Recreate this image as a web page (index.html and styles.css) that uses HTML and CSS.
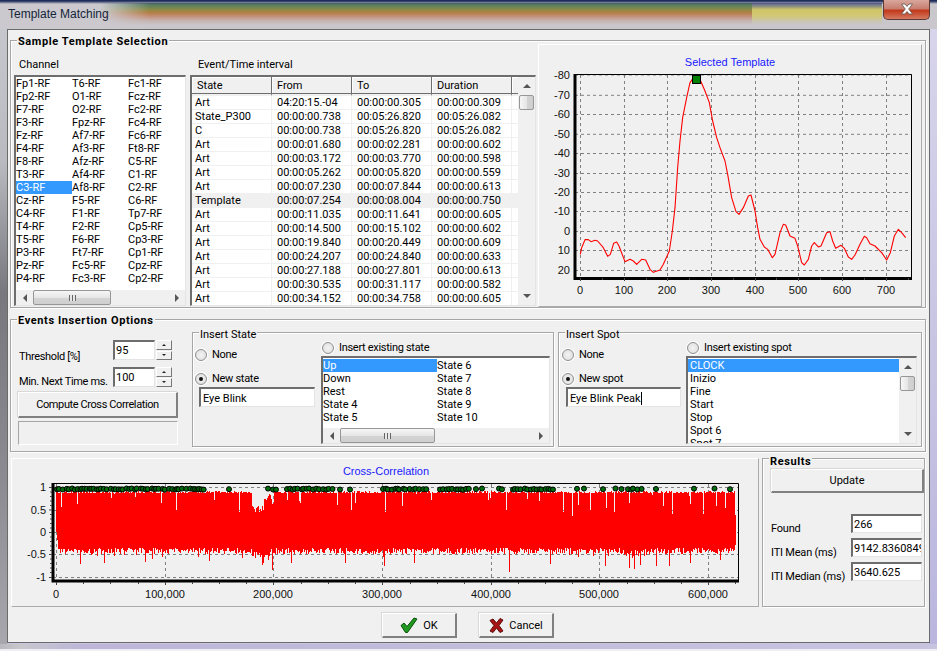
FILE: index.html
```html
<!DOCTYPE html>
<html lang="en">
<head>
<meta charset="utf-8">
<title>Template Matching</title>
<link rel="stylesheet" href="styles.css">
</head>
<body>
<div class="window">
  <header class="titlebar">
    <span class="title">Template Matching</span>
    <button class="close" type="button" aria-label="Close">
      <svg width="18" height="12" viewBox="0 0 18 12"><path d="M3.500 1h3.500l2 2.500 2-2.500h3.500l-3.800 5 3.800 5h-3.500l-2-2.500-2 2.500h-3.500l3.800-5z" fill="#fff" stroke="#5f5550" stroke-width=".8"/></svg>
    </button>
  </header>
  <main class="client">
    <section class="group sample">
      <span class="legend strong">Sample Template Selection</span>
      <div class="col channel-col">
        <div class="cap">Channel</div>
        <div class="sunken channel-list">
          <div class="channels">
            <span>Fp1-RF</span><span>Fp2-RF</span><span>F7-RF</span><span>F3-RF</span><span>Fz-RF</span><span>F4-RF</span><span>F8-RF</span><span>T3-RF</span><span class="sel">C3-RF</span><span>Cz-RF</span><span>C4-RF</span><span>T4-RF</span><span>T5-RF</span><span>P3-RF</span><span>Pz-RF</span><span>P4-RF</span>
            <span>T6-RF</span><span>O1-RF</span><span>O2-RF</span><span>Fpz-RF</span><span>Af7-RF</span><span>Af3-RF</span><span>Afz-RF</span><span>Af4-RF</span><span>Af8-RF</span><span>F5-RF</span><span>F1-RF</span><span>F2-RF</span><span>F6-RF</span><span>Ft7-RF</span><span>Fc5-RF</span><span>Fc3-RF</span>
            <span>Fc1-RF</span><span>Fcz-RF</span><span>Fc2-RF</span><span>Fc4-RF</span><span>Fc6-RF</span><span>Ft8-RF</span><span>C5-RF</span><span>C1-RF</span><span>C2-RF</span><span>C6-RF</span><span>Tp7-RF</span><span>Cp5-RF</span><span>Cp3-RF</span><span>Cp1-RF</span><span>Cpz-RF</span><span>Cp2-RF</span>
          </div>
          <div class="hscroll"><i class="arrow a-left"></i><div class="track"><div class="thumb thumb-channel"><b class="grip"></b></div></div><i class="arrow a-right"></i></div>
        </div>
      </div>
      <div class="col events-col">
        <div class="cap">Event/Time interval</div>
        <div class="sunken events">
          <div class="table-wrap">
            <table>
              <thead><tr><th>State</th><th>From</th><th>To</th><th>Duration</th><th></th></tr></thead>
              <tbody>
                <tr><td>Art</td><td>04:20:15.-04</td><td>00:00:00.305</td><td>00:00:00.309</td><td></td></tr>
                <tr><td>State_P300</td><td>00:00:00.738</td><td>00:05:26.820</td><td>00:05:26.082</td><td></td></tr>
                <tr><td>C</td><td>00:00:00.738</td><td>00:05:26.820</td><td>00:05:26.082</td><td></td></tr>
                <tr><td>Art</td><td>00:00:01.680</td><td>00:00:02.281</td><td>00:00:00.602</td><td></td></tr>
                <tr><td>Art</td><td>00:00:03.172</td><td>00:00:03.770</td><td>00:00:00.598</td><td></td></tr>
                <tr><td>Art</td><td>00:00:05.262</td><td>00:00:05.820</td><td>00:00:00.559</td><td></td></tr>
                <tr><td>Art</td><td>00:00:07.230</td><td>00:00:07.844</td><td>00:00:00.613</td><td></td></tr>
                <tr class="marked"><td>Template</td><td>00:00:07.254</td><td>00:00:08.004</td><td>00:00:00.750</td><td></td></tr>
                <tr><td>Art</td><td>00:00:11.035</td><td>00:00:11.641</td><td>00:00:00.605</td><td></td></tr>
                <tr><td>Art</td><td>00:00:14.500</td><td>00:00:15.102</td><td>00:00:00.602</td><td></td></tr>
                <tr><td>Art</td><td>00:00:19.840</td><td>00:00:20.449</td><td>00:00:00.609</td><td></td></tr>
                <tr><td>Art</td><td>00:00:24.207</td><td>00:00:24.840</td><td>00:00:00.633</td><td></td></tr>
                <tr><td>Art</td><td>00:00:27.188</td><td>00:00:27.801</td><td>00:00:00.613</td><td></td></tr>
                <tr><td>Art</td><td>00:00:30.535</td><td>00:00:31.117</td><td>00:00:00.582</td><td></td></tr>
                <tr><td>Art</td><td>00:00:34.152</td><td>00:00:34.758</td><td>00:00:00.605</td><td></td></tr>
              </tbody>
            </table>
          </div>
          <div class="vscroll"><i class="arrow a-up"></i><div class="track"><div class="thumb thumb-events"></div></div><i class="arrow a-down"></i></div>
        </div>
      </div>
      <div class="panel template-panel">
        <svg class="plot template-plot" viewBox="539 44 382 261" role="img" aria-label="Selected Template chart">
          <text class="chart-title" x="730" y="65" text-anchor="middle">Selected Template</text>
          <g class="grid">
            <path d="M575 74H912M575 94.300H912M575 113.500H912M575 133.300H912M575 152.500H912M575 172.500H912M575 191.500H912M575 210.500H912M575 230.500H912M575 249.500H912M575 269.500H912"/>
            <path d="M580.500 74V276M624.500 74V276M667.500 74V276M711.500 74V276M755.500 74V276M798.500 74V276M842.500 74V276M886.500 74V276"/>
          </g>
          <polyline class="trace" transform="translate(535 0) scale(.33333)" points="136,760 140,740 150,716 160,716 168,722 180,718 188,720 205,740 218,766 226,760 236,727 245,723 252,735 270,782 285,775 295,780 305,790 320,775 332,777 345,805 355,814 375,807 385,790 403,750 412,690 420,620 428,500 435,420 443,350 455,290 465,245 472,235 497,240 510,270 523,305 533,360 545,410 555,440 570,480 578,520 590,590 603,632 612,640 625,620 640,585 648,582 660,630 668,680 675,715 688,738 698,745 712,770 720,760 735,695 745,670 752,672 765,705 780,712 788,735 800,785 808,792 820,775 830,735 838,725 850,738 858,735 875,695 885,692 893,720 902,742 918,733 928,742 940,768 950,775 960,762 975,730 988,706 995,710 1005,728 1020,735 1040,755 1055,777 1066,755 1078,705 1090,685 1100,695 1112,710"/>
          <path class="frame-thin" d="M575 73.500H911.500V276"/>
          <path class="frame-thick" d="M575 73V277.500H912"/>
          <path class="ticks" d="M580.500 277V280M602.500 277V279M624.500 277V280M646.500 277V279M667.500 277V280M689.500 277V279M711.500 277V280M733.500 277V279M755.500 277V280M776.500 277V279M798.500 277V280M820.500 277V279M842.500 277V280M864.500 277V279M886.500 277V280M908.500 277V279"/>
          <rect class="marker" x="692.500" y="74.500" width="8" height="8"/>
          <g class="axis-y" text-anchor="end">
            <text x="570" y="78">-80</text><text x="570" y="98">-70</text><text x="570" y="117">-60</text><text x="570" y="137">-50</text><text x="570" y="156">-40</text><text x="570" y="176">-30</text><text x="570" y="195">-20</text><text x="570" y="214">-10</text><text x="570" y="234">0</text><text x="570" y="253">10</text><text x="570" y="273">20</text>
          </g>
          <g class="axis-x" text-anchor="middle">
            <text x="580" y="293">0</text><text x="624" y="293">100</text><text x="667" y="293">200</text><text x="711" y="293">300</text><text x="755" y="293">400</text><text x="798" y="293">500</text><text x="842" y="293">600</text><text x="886" y="293">700</text>
          </g>
        </svg>
      </div>
    </section>

    <section class="group options">
      <span class="legend strong">Events Insertion Options</span>
      <div class="opt-col">
        <div class="opt-row">
          <label class="opt-label">Threshold [%]</label>
          <div class="sunken field num">95</div>
          <div class="spin"><span class="spin-btn"><i class="tri tri-up"></i></span><span class="spin-btn"><i class="tri tri-down"></i></span></div>
        </div>
        <div class="opt-row second">
          <label class="opt-label">Min. Next Time ms.</label>
          <div class="sunken field num tall">100</div>
          <div class="spin tall"><span class="spin-btn"><i class="tri tri-up"></i></span><span class="spin-btn"><i class="tri tri-down"></i></span></div>
        </div>
        <button class="btn compute" type="button">Compute Cross Correlation</button>
        <div class="progress"></div>
      </div>
      <div class="group insert state-group">
        <span class="legend">Insert State</span>
        <div class="insert-left">
          <div class="radio-row"><i class="radio"></i>None</div>
          <div class="radio-row second-radio"><i class="radio on"></i>New state</div>
          <div class="sunken field name">Eye Blink</div>
        </div>
        <div class="insert-right">
          <div class="radio-row existing"><i class="radio"></i>Insert existing state</div>
          <div class="sunken picklist state-list">
            <div class="state-rows">
              <span class="sel">Up</span><span>Down</span><span>Rest</span><span>State 4</span><span>State 5</span>
              <span>State 6</span><span>State 7</span><span>State 8</span><span>State 9</span><span>State 10</span>
            </div>
            <div class="hscroll"><i class="arrow a-left"></i><div class="track"><div class="thumb thumb-state"><b class="grip"></b></div></div><i class="arrow a-right"></i></div>
          </div>
        </div>
      </div>
      <div class="group insert spot-group">
        <span class="legend">Insert Spot</span>
        <div class="insert-left">
          <div class="radio-row"><i class="radio"></i>None</div>
          <div class="radio-row second-radio"><i class="radio on"></i>New spot</div>
          <div class="sunken field name">Eye Blink Peak<i class="caret"></i></div>
        </div>
        <div class="insert-right">
          <div class="radio-row existing"><i class="radio"></i>Insert existing spot</div>
          <div class="sunken picklist spot-list">
            <div class="spot-rows">
              <span class="sel">CLOCK</span><span>Inizio</span><span>Fine</span><span>Start</span><span>Stop</span><span>Spot 6</span><span>Spot 7</span>
            </div>
            <div class="vscroll"><i class="arrow a-up"></i><div class="track"><div class="thumb thumb-spot"></div></div><i class="arrow a-down"></i></div>
          </div>
        </div>
      </div>
    </section>

    <div class="lower">
      <div class="panel cross-panel">
        <svg class="plot cross-plot" viewBox="12 459 746 147" role="img" aria-label="Cross-Correlation chart">
          <text class="chart-title" x="386" y="475" text-anchor="middle">Cross-Correlation</text>
          <g class="grid">
            <path d="M53 487.500H738M53 510.500H738M53 532.500H738M53 554.500H738M53 577.500H738"/>
            <path d="M56.500 484V581M165.500 484V581M273.500 484V581M382.500 484V581M491.500 484V581M599.500 484V581M708.500 484V581"/>
          </g>
          <path id="cc-trace" class="cc-trace" d=""/>
          <g id="cc-dots" class="cc-dots"></g>
          <path class="frame-thin" d="M52 483.500H738.500V581"/>
          <path class="frame-thick" d="M53 483V581H739"/>
          <path class="ticks" d="M56.500 582V585M83.500 582V584M110.500 582V584M138.500 582V584M165.500 582V585M192.500 582V584M219.500 582V584M246.500 582V584M273.500 582V585M301.500 582V584M328.500 582V584M355.500 582V584M382.500 582V585M410.500 582V584M437.500 582V584M464.500 582V584M491.500 582V585M518.500 582V584M545.500 582V584M572.500 582V584M599.500 582V585M627.500 582V584M654.500 582V584M681.500 582V584M708.500 582V585M735.500 582V584"/>
          <path class="ticks" d="M49 487.500H52M50 492H52M50 496.500H52M50 501H52M50 505.500H52M49 510H52M50 514.500H52M50 519H52M50 523.500H52M50 528H52M49 532.500H52M50 537H52M50 541.500H52M50 546H52M50 550.500H52M49 554.500H52M50 559H52M50 563.500H52M50 568H52M50 572.500H52M49 577.500H52"/>
          <g class="axis-y" text-anchor="end">
            <text x="46" y="491">1</text><text x="46" y="514">0.5</text><text x="46" y="536">0</text><text x="46" y="558">-0.5</text><text x="46" y="581">-1</text>
          </g>
          <g class="axis-x" text-anchor="middle">
            <text x="56" y="598">0</text><text x="165" y="598">100,000</text><text x="273" y="598">200,000</text><text x="382" y="598">300,000</text><text x="491" y="598">400,000</text><text x="599" y="598">500,000</text><text x="708" y="598">600,000</text>
          </g>
        </svg>
      </div>
      <section class="group results">
        <span class="legend strong results-legend">Results</span>
        <button class="btn update" type="button">Update</button>
        <div class="res-row first-res"><label>Found</label><div class="sunken field value">266</div></div>
        <div class="res-row"><label>ITI Mean (ms)</label><div class="sunken field value">9142.8360849</div></div>
        <div class="res-row"><label>ITI Median (ms)</label><div class="sunken field value">3640.625</div></div>
      </section>
    </div>

    <footer class="footer">
      <button class="btn action" type="button">
        <svg width="18" height="16" viewBox="0 0 18 16"><path d="M1 8.500l3-2.500 3 3.500 7-8.500 3 1-9.500 13.500h-2z" fill="#1f9a1f" stroke="#0b4f0b" stroke-width="1"/></svg>
        <span>OK</span>
      </button>
      <button class="btn action" type="button">
        <svg width="15" height="15" viewBox="0 0 15 15"><path d="M1 2.500l3-1.500 3.500 4 3.500-4.500 3 1.500-4 5.500 4 5.500-3 1.500-3.500-4.500-3.500 4.500-3-1.500 4-5.500z" fill="#a81414" stroke="#5e0c0c" stroke-width="1"/></svg>
        <span>Cancel</span>
      </button>
    </footer>
  </main>
</div>
<script src="chart.js"></script>
</body>
</html>
```

FILE: styles.css
```css
* { box-sizing: border-box; }

html, body {
  margin: 0;
  padding: 0;
  height: 100%;
  overflow: hidden;
}

body {
  font: 11px/13px Roboto, "Liberation Sans", Arial, sans-serif;
  color: #000;
}

.window {
  width: 937px;
  height: 651px;
  display: flex;
  flex-direction: column;
  background:
    linear-gradient(180deg, transparent 0, transparent 649px, #eeeef4 649px) 0 0 / 100% 100% no-repeat,
    linear-gradient(90deg, #b9b9bd 0, #c8c8cc 20px, #bdb6d8 80px, #c8c4e0 100%) 0 644px / 100% 5px no-repeat,
    linear-gradient(180deg, #c9c9d0 0, #b9b9c0 25%, #77777d 45%, #8c8c92 75%, #a8a8ae 100%) left top / 7px 100% no-repeat,
    linear-gradient(180deg, #d8d5ec 0, #c9c6e4 50%, #b9b5de 100%) right top / 8px 100% no-repeat,
    #c8c4e0;
}

.titlebar {
  height: 29px;
  flex: none;
  display: flex;
  justify-content: space-between;
  align-items: flex-start;
  padding: 0 7px 0 8px;
  background:
    linear-gradient(180deg, #1e2c5c 0, #1e2c5c 1px, rgba(60,80,120,0) 4px) 0 0 / 100% 100% no-repeat,
    linear-gradient(90deg, #cbc9ce 0, #cbc9ce 100px, rgba(203,201,206,0) 150px) 0 0 / 100% 100% no-repeat,
    linear-gradient(180deg, #4f6d6a 0, #64845a 15%, #8c8a45 30%, #b57f45 45%, #c48f78 60%, #c6b3ae 80%, #c9c7cb 100%) 0 3px / 752px 22px no-repeat,
    linear-gradient(180deg, #5c5f9a 0, #8a8f80 15%, #d0c468 30%, #d2c876 60%, #c9c5b8 85%, #c9c7cb 100%) 752px 3px / 130px 22px no-repeat,
    #c9c7cb;
}

.title {
  font: 12px/15px "Liberation Sans", Arial, sans-serif;
  color: #15253a;
  margin-top: 7px;
}

.close {
  width: 47px;
  height: 20px;
  padding: 0 0 2px;
  display: flex;
  align-items: center;
  justify-content: center;
  border: 1px solid #5c3a34;
  border-top: 0;
  border-radius: 0 0 5px 5px;
  background: linear-gradient(180deg, #d9a79c 0, #c87f72 45%, #c2391b 55%, #d47a60 100%);
}

.client {
  flex: 1;
  margin: 0 7px 8px;
  padding: 10px 3px 0 2px;
  background: #f0f0f0;
  border: 1px solid #6b6b6b;
}

.group {
  position: relative;
  border: 1px solid #a6a6a6;
  box-shadow: 1px 1px 0 #fff, inset 1px 1px 0 #fff;
}

.legend {
  position: absolute;
  top: -5px;
  left: 6px;
  padding: 0 1px;
  background: #f0f0f0;
  white-space: nowrap;
}

.legend.strong {
  top: -6px;
  font-weight: 700;
  letter-spacing: .6px;
}

.legend.results-legend { top: -4px; }

.sample {
  height: 268px;
  display: flex;
  padding: 2px 2px 1px 3px;
}

.col {
  display: flex;
  flex-direction: column;
}

.channel-col { width: 172px; margin-right: 4px; }
.events-col { width: 346px; margin-right: 2px; }

.cap {
  height: 32px;
  padding: 15px 0 0 5px;
  flex: none;
}

.events-col .cap { padding-left: 8px; }

.sunken {
  background: #fff;
  border-style: solid;
  border-width: 2px 1px 1px 2px;
  border-color: #6d6d6d #e4e4e4 #e4e4e4 #6d6d6d;
}

.channel-list {
  height: 231px;
  display: flex;
  flex-direction: column;
  justify-content: space-between;
  overflow: hidden;
}

.channels {
  display: grid;
  grid-auto-flow: column;
  grid-template-rows: repeat(16, 13px);
  grid-template-columns: repeat(3, 56px);
}

.sel {
  background: #3399ff;
  color: #fff;
}

.hscroll {
  height: 15px;
  flex: none;
  display: flex;
  background: #f0f0f0;
  align-items: stretch;
}

.vscroll {
  width: 17px;
  flex: none;
  display: flex;
  flex-direction: column;
  background: #f0f0f0;
}

.track { flex: 1; min-width: 0; min-height: 0; }

.arrow {
  flex: none;
  display: flex;
  align-items: center;
  justify-content: center;
}

.hscroll .arrow { width: 17px; }
.vscroll .arrow { height: 18px; }

.arrow::before {
  content: "";
  border: 4px solid transparent;
}

.a-left::before { border-left-width: 0; border-right-color: #555; }
.a-right::before { border-right-width: 0; border-left-color: #555; }
.a-up::before { border-top-width: 0; border-bottom-color: #555; }
.a-down::before { border-bottom-width: 0; border-top-color: #555; }

.thumb {
  border: 1px solid #979797;
  border-radius: 2px;
  background: linear-gradient(180deg, #f6f6f6 0, #e6e6e6 50%, #d4d4d4 51%, #cfcfcf 100%);
  display: flex;
  align-items: center;
  justify-content: center;
}

.vscroll .thumb {
  background: linear-gradient(90deg, #f6f6f6 0, #e6e6e6 50%, #d4d4d4 51%, #cfcfcf 100%);
}

.hscroll .thumb { height: 100%; }
.thumb-channel { width: 78px; }
.thumb-state { width: 95px; }
.thumb-events { height: 15px; margin: 0 1px; }
.thumb-spot { height: 15px; margin: 0 1px; }

.grip {
  width: 7px;
  height: 6px;
  background: repeating-linear-gradient(90deg, #666 0, #666 1px, #e8e8e8 1px, #e8e8e8 3px);
}

.events {
  height: 231px;
  display: flex;
  overflow: hidden;
}

.table-wrap {
  width: 326px;
  flex: none;
  overflow: hidden;
}

table {
  width: 326px;
  table-layout: fixed;
  border-collapse: separate;
  border-spacing: 0;
}

th:nth-child(-n+4), td:nth-child(-n+4) { width: 80px; }

th {
  height: 19px;
  padding: 0 0 1px 5px;
  text-align: left;
  font-weight: 400;
  background: #f0f0f0;
  border-bottom: 2px solid #f0f0f0;
  border-right: 1px solid #6d6d6d;
  box-shadow: inset 0 -1px 0 #6d6d6d, inset 1px 1px 0 #fff;
}

th:last-child { border-right: 0; }

td {
  height: 14px;
  line-height: 13px;
  padding: 0 0 0 5px;
  border-right: 1px solid #f0f0f0;
  border-bottom: 1px solid #f0f0f0;
  white-space: nowrap;
  overflow: hidden;
}

td:first-child { padding-left: 3px; }
td:last-child { border-right: 0; }
.marked td { background: #f0f0f0; }

.panel {
  background: #f0f0f0;
  border: 1px solid;
  border-color: #fff #ababab #ababab #fff;
}

.template-panel {
  width: 384px;
  height: 263px;
  margin-top: 1px;
}

.plot {
  display: block;
  width: 100%;
  height: 100%;
  font: 11px "Liberation Sans", Arial, sans-serif;
}

.chart-title { fill: #1a1aff; }
.grid path { fill: none; stroke: #808080; stroke-width: 1; stroke-dasharray: 3 3; }
.trace { fill: none; stroke: #ff0000; stroke-width: 3.300; stroke-linejoin: round; }
.frame-thin { fill: none; stroke: #000; stroke-width: 1; }
.frame-thick { fill: none; stroke: #000; stroke-width: 3; }
.ticks { fill: none; stroke: #444; stroke-width: 1; }
.marker { fill: #008000; stroke: #000; stroke-width: 1; }
.axis-x text, .axis-y text { fill: #111; }
.cc-trace { fill: none; stroke: #ff0000; stroke-width: 1; shape-rendering: crispEdges; }
.cc-dots circle { fill: #006e0c; stroke: #000; stroke-width: 1; }

.options {
  height: 133px;
  margin-top: 11px;
  display: flex;
  padding-left: 7px;
}

.opt-col {
  width: 161px;
  margin-right: 13px;
  padding-top: 20px;
}

.opt-row {
  display: flex;
  align-items: flex-end;
  height: 20px;
}

.opt-row.second { margin-top: 7px; height: 20px; }

.opt-label {
  width: 95px;
  padding-left: 1px;
  flex: none;
  position: relative;
  top: 3px;
  white-space: nowrap;
  letter-spacing: -.35px;
}

.second .opt-label { top: 1px; }

.field {
  line-height: 13px;
  white-space: nowrap;
  overflow: hidden;
  padding: 2px 0 0 1px;
}

.num { width: 42px; height: 20px; }

.spin {
  width: 16px;
  height: 20px;
  margin-left: 1px;
  display: flex;
  flex-direction: column;
  gap: 1px;
}

.spin-btn {
  flex: 1;
  display: flex;
  align-items: center;
  justify-content: center;
  background: #f0f0f0;
  border: 1px solid;
  border-color: #fff #777 #777 #fff;
}

.tri {
  border: 2px solid transparent;
}

.tri-up { border-top-width: 0; border-bottom-color: #222; }
.tri-down { border-bottom-width: 0; border-top-color: #222; }

.btn {
  display: flex;
  align-items: center;
  justify-content: center;
  font: inherit;
  color: #000;
  background: #f0f0f0;
  padding: 0;
  border-style: solid;
  border-width: 1px 2px 2px 1px;
  border-color: #fff #808080 #808080 #fff;
  box-shadow: -1px -1px 0 #d8d8d8;
}

.compute {
  width: 160px;
  height: 26px;
  margin-top: 5px;
  letter-spacing: -.4px;
}

.progress {
  width: 160px;
  height: 24px;
  margin-top: 3px;
  border: 1px solid;
  border-color: #a6a6a6 #fff #fff #a6a6a6;
}

.insert {
  height: 115px;
  margin-top: 12px;
  display: flex;
}

.state-group { width: 362px; padding-left: 6px; }
.spot-group { width: 364px; padding-left: 7px; margin-left: 4px; }

.insert-left { width: 116px; padding-top: 15px; margin-right: 6px; flex: none; }
.spot-group .insert-left { width: 115px; margin-right: 5px; }
.insert-right { flex: 1; padding-top: 8px; padding-right: 3px; }
.spot-group .insert-right { padding-right: 4px; }

.radio-row {
  display: flex;
  align-items: center;
  height: 13px;
  white-space: nowrap;
  letter-spacing: -.3px;
}

.second-radio { margin-top: 11px; }

.radio {
  width: 12px;
  height: 12px;
  margin: 0 5px 0 -4px;
  flex: none;
  border-radius: 50%;
  border: 1px solid #8e8f8f;
  background: radial-gradient(circle, #f4f4f4 0, #e2e2e2 70%, #fff 100%);
  box-shadow: 0 0 0 1px #fff;
  display: flex;
  align-items: center;
  justify-content: center;
}

.radio.on::after {
  content: "";
  width: 4px;
  height: 4px;
  border-radius: 50%;
  background: #111;
}

.existing .radio { margin-left: 1px; }

.name {
  width: 100%;
  height: 20px;
  margin-top: 2px;
  padding: 3px 0 0 2px;
}

.caret {
  display: inline-block;
  width: 1px;
  height: 13px;
  vertical-align: top;
  background: #000;
}

.picklist {
  height: 88px;
  margin-top: 2px;
  display: flex;
  overflow: hidden;
}

.state-list { flex-direction: column; }

.state-rows {
  flex: 1;
  display: grid;
  grid-auto-flow: column;
  grid-template-rows: repeat(5, 13px);
  grid-template-columns: 114px 1fr;
  align-content: start;
  padding-top: 1px;
}

.spot-rows {
  flex: 1;
  min-width: 0;
  overflow: hidden;
  padding-top: 1px;
}

.spot-rows span { display: block; height: 13px; padding-left: 2px; }

.lower {
  display: flex;
  margin-top: 6px;
  height: 149px;
}

.cross-panel { width: 748px; margin-left: 1px; }

.results {
  width: 163px;
  margin-left: 3px;
  padding: 10px 2px 0 8px;
}

.update {
  width: 153px;
  height: 24px;
}

.res-row {
  display: flex;
  align-items: flex-end;
  justify-content: space-between;
  margin-top: 5px;
}

.first-res { margin-top: 21px; }
.res-row label { margin-bottom: -2px; white-space: nowrap; letter-spacing: -.2px; }
.value { width: 71px; height: 19px; flex: none; }

.footer {
  display: flex;
  justify-content: center;
  gap: 22px;
  margin-top: 6px;
}

.action {
  width: 75px;
  height: 25px;
  gap: 5px;
}
```

FILE: chart.js
```js
(function () {
  var seed = 20240611;
  function rnd() {
    seed = (seed * 1664525 + 1013904223) >>> 0;
    return seed / 4294967296;
  }

  var topSpikes = { 61: 507, 77: 504, 161: 503, 176: 510, 214: 500, 239: 512, 287: 500, 300: 503, 337: 505, 351: 510, 355: 503,
    385: 512, 402: 506, 431: 500, 488: 500, 506: 510, 563: 512, 572: 516, 578: 505, 590: 510, 606: 508, 614: 512,
    663: 506, 672: 514, 690: 504, 703: 514, 716: 506, 725: 508 };
  var lowSpikes = { 80: 564, 104: 563, 145: 562, 209: 561, 262: 565, 272: 570, 291: 563, 345: 563, 384: 566, 414: 563,
    509: 572, 550: 564, 605: 566, 629: 568, 634: 569, 640: 565, 656: 566, 669: 566, 690: 563 };

  var d = [];
  for (var x = 56; x <= 735; x++) {
    var top = 491 + rnd() * 2.5;
    var low = 548 + rnd() * 6;
    if (rnd() < 0.035) top += rnd() * 14;
    if (rnd() < 0.06) low += rnd() * 6;
    if (x < 58) { top = 492; low = 532 + (x - 56) * 8; }
    if (x > 730 && x < 733) top = 492;
    if (x >= 252 && x < 264) top = 506 + rnd() * 6;
    if (x >= 264 && x < 268) top = 497 + rnd() * 12;
    if (x >= 268 && x < 276) top = 490 + rnd() * 14;
    if (x >= 250 && x < 270) low += (x - 250) / 4 + rnd() * 3;
    if (x > 620 && x < 650) low += rnd() * 4;
    if (topSpikes[x]) top = topSpikes[x];
    if (lowSpikes[x]) low = lowSpikes[x];
    if (x === 735) { top = 515; low = 545; }
    d.push("M" + (x + 0.5) + " " + top.toFixed(0) + "V" + low.toFixed(0));
  }
  document.getElementById("cc-trace").setAttribute("d", d.join(""));

  var ns = "http://www.w3.org/2000/svg";
  var dots = document.getElementById("cc-dots");
  function dot(cx) {
    var c = document.createElementNS(ns, "circle");
    c.setAttribute("cx", cx);
    c.setAttribute("cy", (488.5 + rnd() * 1.2).toFixed(1));
    c.setAttribute("r", "2.5");
    dots.appendChild(c);
  }
  function run(a, b) {
    for (var x = a; x <= b; x += 1.5 + rnd() * 3) dot(x.toFixed(1));
  }
  run(57, 207);
  [229, 268, 273, 276, 340, 350, 383].forEach(dot);
  run(287, 333);
  run(386, 428);
  run(440, 469);
  [476, 482, 499, 502].forEach(dot);
  run(513, 553);
  [577, 584, 603, 615.5, 621.5].forEach(dot);
  run(628, 645);
  [656, 694, 714.5, 730].forEach(dot);
})();
```
